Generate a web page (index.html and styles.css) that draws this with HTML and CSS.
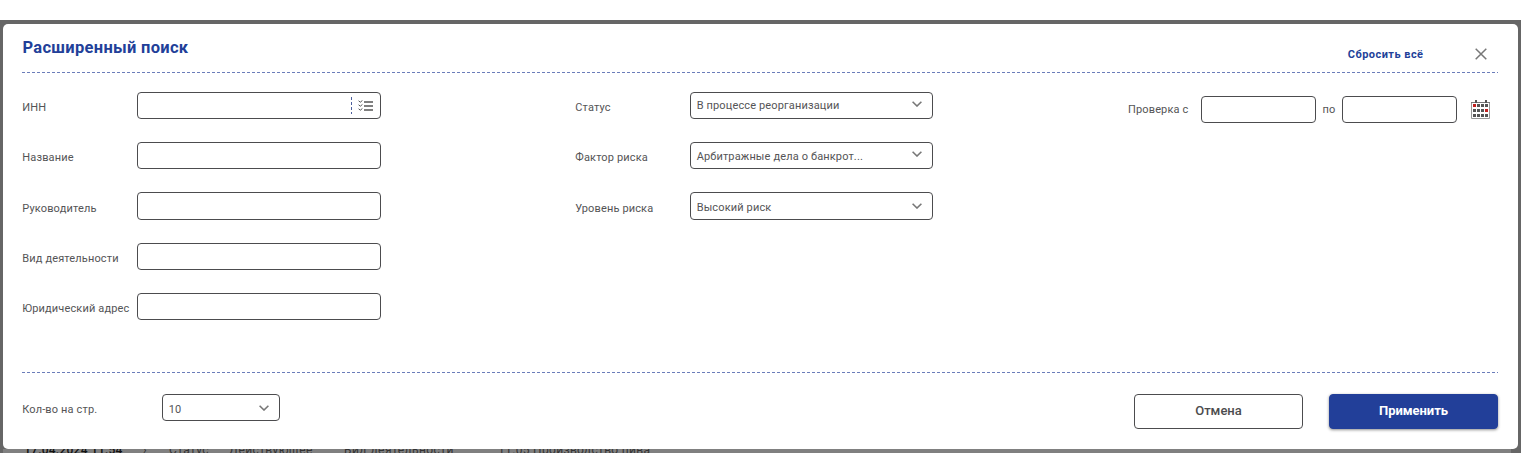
FILE: index.html
```html
<!DOCTYPE html>
<html lang="ru">
<head>
<meta charset="utf-8">
<title>Расширенный поиск</title>
<link rel="stylesheet" href="styles.css">
</head>
<body>
<div class="backdrop">
  <section class="dialog">
    <header class="head">
      <h1 class="title">Расширенный поиск</h1>
      <a class="reset">Сбросить всё</a>
      <svg class="close" width="12" height="12" viewBox="0 0 12 12"><path d="M.7.7 11.3 11.3M11.3.7.7 11.3" stroke="#777" stroke-width="1.5" fill="none"/></svg>
    </header>
    <div class="rule"></div>
    <div class="form">
      <div class="column">
        <div class="row"><label class="label">ИНН</label><div class="field inn"><span class="divider"></span>
          <svg width="15" height="12" viewBox="0 0 15 12" fill="none" stroke="#555"><path d="M6 2h9M6 6h9M6 10h9" stroke="#555" stroke-width="1.3"/><path d="M.6 .8 2.3 2.2 4.4 .5M.6 4.8 2.3 6.2 4.4 4.5M.6 8.8 2.3 10.2 4.4 8.5"/></svg></div></div>
        <div class="row"><label class="label">Название</label><div class="field"></div></div>
        <div class="row"><label class="label">Руководитель</label><div class="field"></div></div>
        <div class="row"><label class="label">Вид деятельности</label><div class="field"></div></div>
        <div class="row"><label class="label">Юридический адрес</label><div class="field"></div></div>
      </div>
      <div class="column">
        <div class="row"><label class="label">Статус</label><div class="field select first"><span>В процессе реорганизации</span><svg class="chevron" width="10" height="6" viewBox="0 0 10 6"><path d="M.6.7 5 5 9.4.7"/></svg></div></div>
        <div class="row"><label class="label">Фактор риска</label><div class="field select second"><span>Арбитражные дела о банкрот...</span><svg class="chevron" width="10" height="6" viewBox="0 0 10 6"><path d="M.6.7 5 5 9.4.7"/></svg></div></div>
        <div class="row"><label class="label">Уровень риска</label><div class="field select"><span>Высокий риск</span><svg class="chevron" width="10" height="6" viewBox="0 0 10 6"><path d="M.6.7 5 5 9.4.7"/></svg></div></div>
      </div>
      <div class="dates">
        <label class="from">Проверка с</label><div class="date"></div>
        <label class="to">по</label><div class="date"></div>
        <svg class="calendar" width="19" height="19" viewBox="0 0 19 19">
          <path d="M.5 2.5h18v16H.5z" fill="#fff" stroke="#999"/>
          <path d="M0 2.5h19" stroke="#777"/>
          <path d="M4 0h2v3H4zM14 0h2v3h-2z" fill="#555"/>
          <path d="M6 4h3v3H6zM10 4h3v3h-3zM14 4h3v3h-3zM2 9h3v3H2zM6 9h3v3H6zM10 9h3v3h-3zM2 14h3v3H2zM6 14h3v3H6zM10 14h3v3h-3zM14 14h3v3h-3z" fill="#555"/>
          <path d="M2 4h3v3H2zM14 9h3v3h-3z" fill="#c1201f"/>
        </svg>
      </div>
    </div>
    <div class="rule"></div>
    <footer class="foot">
      <label class="count">Кол-во на стр.</label>
      <div class="field select pages"><span>10</span><svg class="chevron" width="10" height="6" viewBox="0 0 10 6"><path d="M.6.7 5 5 9.4.7"/></svg></div>
      <button class="button cancel">Отмена</button>
      <button class="button apply">Применить</button>
    </footer>
  </section>
  <div class="behind">
    <span class="stamp">17.04.2024 11:54</span><span class="arrow">›</span><span class="status">Статус</span><span class="active">Действующее</span><span class="kind">Вид деятельности</span><span class="value">11.05 Производство пива</span>
  </div>
</div>
</body>
</html>
```
FILE: styles.css
```css
* { box-sizing: border-box; }
body { margin: 0; padding-top: 20px; height: 453px; overflow: hidden; background: #fff; font: 11px/14px Roboto, sans-serif; letter-spacing: .14px; color: #545456; }
.backdrop { width: 1521px; height: 433px; padding: 4px 3px 0; background: #666; overflow: hidden; }
.dialog { height: 425px; padding: 0 20px 0 19px; border-radius: 5px; background: #fff; }
.head { display: flex; align-items: flex-start; height: 48px; }
.title { margin: 14px auto 0 0; padding-left: .5px; font-size: 16.5px; line-height: 20px; font-weight: 700; letter-spacing: .3px; color: #223f99; }
.reset { margin: 24px 51px 0 0; font-weight: 700; letter-spacing: .46px; color: #223f99; }
.close { margin: 24px 11.5px 0 0; }
.rule { height: 1px; background: repeating-linear-gradient(90deg, #6b7dba 0 3px, #fff 3px 5px); }
.form { display: flex; height: 299px; padding-top: 18.9px; }
.column { width: 553px; }
.row { display: flex; align-items: flex-start; height: 50.25px; }
.label { width: 115px; padding: 9.2px 0 0 .3px; white-space: nowrap; }
.field { display: flex; width: 244px; height: 27.3px; border: 1px solid #4c4c4e; border-radius: 4px; }
.inn { justify-content: flex-end; align-items: center; gap: 6px; padding-right: 7px; }
.divider { width: 1px; height: 17px; background: repeating-linear-gradient(#4c5f9c 0 3px, #fff 3px 5px); }
.select { justify-content: space-between; width: 243px; padding: 7.2px 10.5px 0 5.7px; }
.first { padding-top: 6.2px; }
.chevron { margin-top: 2.4px; fill: none; stroke: #777; stroke-width: 1.6; }
.first .chevron { margin-top: 1.9px; }
.second .chevron { margin-top: .7px; }
.dates { display: flex; align-items: flex-start; padding-top: 4px; }
.from { width: 73px; padding-top: 7px; }
.to { width: 26px; padding: 7px 0 0 6.5px; }
.date { width: 115px; height: 27px; border: 1px solid #4c4c4e; border-radius: 4px; }
.calendar { margin: 4px 0 0 14px; }
.foot { display: flex; align-items: flex-start; padding-top: 21px; }
.count { width: 140px; padding: 9px 0 0 .3px; }
.pages { width: 118px; height: 27px; margin-right: auto; padding-top: 7.6px; }
.pages .chevron { margin-top: 2px; }
.button { width: 169px; height: 35px; padding: 0 0 2px; border: 1px solid #4c4c4e; border-radius: 4px; background: #fff; color: #4c4c4e; font: 500 13px/31px Roboto, sans-serif; letter-spacing: 0; }
.apply { margin-left: 26px; border-color: #223f99; background: #223f99; color: #fff; font-weight: 700; letter-spacing: -.05px; box-shadow: 0 1px 3px rgba(0, 0, 0, .45); }
.behind { display: flex; width: 1508px; height: 4px; padding-left: 21px; overflow: hidden; background: #808080; color: #333; font-size: 12px; line-height: 3px; white-space: nowrap; }
.stamp { width: 119px; color: #111; font-weight: 500; letter-spacing: .25px; }
.arrow { width: 26px; }
.status { width: 60px; letter-spacing: .4px; }
.active { width: 115px; letter-spacing: .4px; }
.kind { width: 154px; letter-spacing: .45px; }
.value { letter-spacing: .33px; }
```
